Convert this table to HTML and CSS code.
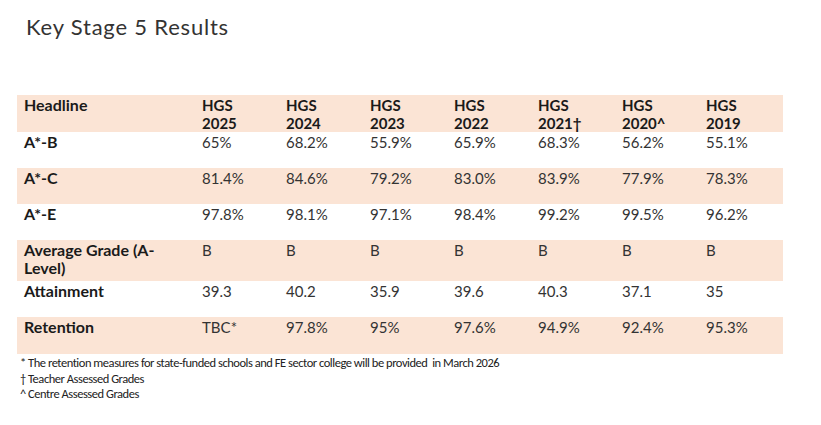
FILE: index.html
```html
<!DOCTYPE html>
<html lang="en">
<head>
<meta charset="utf-8">
<title>Key Stage 5 Results</title>
<link rel="stylesheet" href="styles.css">
</head>
<body>
<main class="page">
  <h1 class="title">Key Stage 5 Results</h1>
  <table class="results">
    <colgroup>
      <col class="col-label">
      <col class="col-year"><col class="col-year"><col class="col-year"><col class="col-year">
      <col class="col-year"><col class="col-year"><col class="col-year">
    </colgroup>
    <thead>
      <tr class="row-head shaded">
        <th class="label">Headline</th>
        <th>HGS<br>2025</th>
        <th>HGS<br>2024</th>
        <th>HGS<br>2023</th>
        <th>HGS<br>2022</th>
        <th>HGS<br>2021†</th>
        <th>HGS<br>2020^</th>
        <th>HGS<br>2019</th>
      </tr>
    </thead>
    <tbody>
      <tr class="row-std">
        <th class="label">A*-B</th><td>65%</td><td>68.2%</td><td>55.9%</td><td>65.9%</td><td>68.3%</td><td>56.2%</td><td>55.1%</td>
      </tr>
      <tr class="row-std shaded">
        <th class="label">A*-C</th><td>81.4%</td><td>84.6%</td><td>79.2%</td><td>83.0%</td><td>83.9%</td><td>77.9%</td><td>78.3%</td>
      </tr>
      <tr class="row-std">
        <th class="label">A*-E</th><td>97.8%</td><td>98.1%</td><td>97.1%</td><td>98.4%</td><td>99.2%</td><td>99.5%</td><td>96.2%</td>
      </tr>
      <tr class="row-tall shaded">
        <th class="label">Average Grade (A-Level)</th><td>B</td><td>B</td><td>B</td><td>B</td><td>B</td><td>B</td><td>B</td>
      </tr>
      <tr class="row-std">
        <th class="label">Attainment</th><td>39.3</td><td>40.2</td><td>35.9</td><td>39.6</td><td>40.3</td><td>37.1</td><td>35</td>
      </tr>
      <tr class="row-last shaded">
        <th class="label">Retention</th><td>TBC*</td><td>97.8%</td><td>95%</td><td>97.6%</td><td>94.9%</td><td>92.4%</td><td>95.3%</td>
      </tr>
    </tbody>
  </table>
  <div class="notes">
    <p>* The retention measures for state-funded schools and FE sector college will be provided&nbsp; in March 2026</p>
    <p>† Teacher Assessed Grades</p>
    <p>^ Centre Assessed Grades</p>
  </div>
</main>
</body>
</html>
```

FILE: styles.css
```css
html, body {
  margin: 0;
  padding: 0;
  background: #ffffff;
}

.page {
  padding: 14px 0 0 17px;
  font-family: Lato, "Liberation Sans", sans-serif;
  color: #333333;
}

.title {
  margin: 0 0 0 9px;
  font-size: 22px;
  line-height: 26px;
  font-weight: 400;
  letter-spacing: 0.8px;
  color: #333333;
  height: 81px;
}

.results {
  border-collapse: collapse;
  table-layout: fixed;
  width: 766px;
  font-size: 15px;
  line-height: 18px;
}

.col-label { width: 178px; }
.col-year { width: 84px; }

.results th,
.results td {
  padding: 1px 7px 0 7px;
  vertical-align: top;
  text-align: left;
}

.results th {
  font-weight: 700;
  color: #1a1a1a;
}

.results th.label {
  font-size: 16px;
}

.results td {
  font-weight: 400;
  color: #333333;
}

.shaded {
  background: #fbe4d5;
}

.row-head { height: 37px; }
.row-std { height: 36px; }
.row-tall { height: 41px; }
.row-last { height: 37px; }

.notes {
  padding: 1px 0 0 3px;
  font-family: Carlito, Lato, sans-serif;
  font-size: 12.5px;
  line-height: 15.5px;
  letter-spacing: -0.47px;
  color: #222222;
}

.notes p {
  margin: 0;
}
```
